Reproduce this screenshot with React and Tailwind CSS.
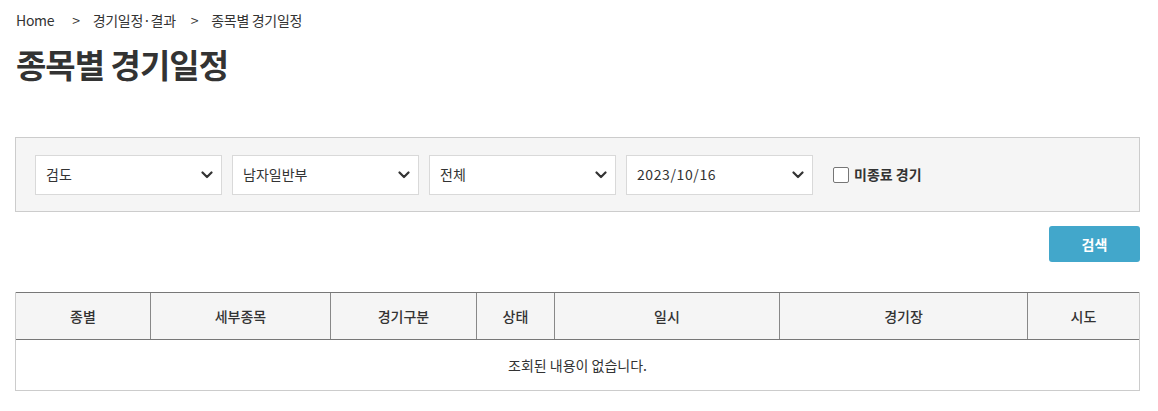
import React from "react";

const font = { fontFamily: '"Noto Sans CJK KR", "Noto Sans", sans-serif' };

function Chevron() {
  return (
    <svg width="12" height="8" viewBox="0 0 12 8" className="shrink-0">
      <path d="M1.5 1.5 L6 6 L10.5 1.5" fill="none" stroke="#333" strokeWidth="2.2" strokeLinecap="round" strokeLinejoin="round" />
    </svg>
  );
}

function Select({ label, wide }) {
  return (
    <div className="flex h-[40px] w-[187px] items-center justify-between border border-[#d9d9d9] bg-white pl-[10px] pr-[8px] text-[14px] text-[#333]">
      <span className={wide ? "tracking-[0.6px]" : ""}>{label}</span>
      <Chevron />
    </div>
  );
}

const cols = [
  { t: "종별", w: "w-[135px]" },
  { t: "세부종목", w: "w-[180px]" },
  { t: "경기구분", w: "w-[146px]" },
  { t: "상태", w: "w-[78px]" },
  { t: "일시", w: "w-[225px]" },
  { t: "경기장", w: "w-[248px]" },
  { t: "시도", w: "flex-1" },
];

export default function App() {
  return (
    <div className="w-[1158px] h-[411px] bg-white text-[#333]" style={font}>
      <div className="ml-[15px] w-[1125px]">
        <div className="flex items-center pt-[10px] text-[14px] text-[#333] tracking-[-0.3px] h-[31px] pl-[1px]">
          <span>Home</span>
          <span className="ml-[18px] mr-[13px]">&gt;</span>
          <span>경기일정·결과</span>
          <span className="ml-[15px] mr-[13px]">&gt;</span>
          <span>종목별 경기일정</span>
        </div>
        <h1 className="mt-[13px] pl-[1px] text-[33px] font-bold leading-[40px] tracking-[-1px] text-[#333]">종목별 경기일정</h1>

        <div className="mt-[53px] flex h-[75px] items-center gap-[10px] border border-[#cccccc] bg-[#f5f5f5] pl-[19px]">
          <Select label="검도" />
          <Select label="남자일반부" />
          <Select label="전체" />
          <Select label="2023/10/16" wide />
          <label className="ml-[10px] flex items-center gap-[5px] text-[14px] font-bold text-[#333]">
            <span className="inline-block h-[16px] w-[16px] rounded-[2px] border border-[#767676] bg-white" />
            <span>미종료 경기</span>
          </label>
        </div>

        <div className="mt-[14px] flex justify-end">
          <button className="h-[36px] w-[91px] rounded-[3px] bg-[#42a7cb] text-[14px] font-bold text-white">검색</button>
        </div>

        <div className="mt-[30px] w-[1125px] border-x border-b border-[#cccccc]">
          <div className="flex h-[48px] border-y border-[#777] bg-[#f5f5f5] text-[14px] font-medium text-[#333]">
            {cols.map((c, i) => (
              <div
                key={c.t}
                className={`${c.w} flex items-center justify-center ${i < cols.length - 1 ? "border-r border-[#888]" : ""}`}
              >
                {c.t}
              </div>
            ))}
          </div>
          <div className="flex h-[50px] items-center justify-center text-[14px] text-[#333]">조회된 내용이 없습니다.</div>
        </div>
      </div>
    </div>
  );
}
